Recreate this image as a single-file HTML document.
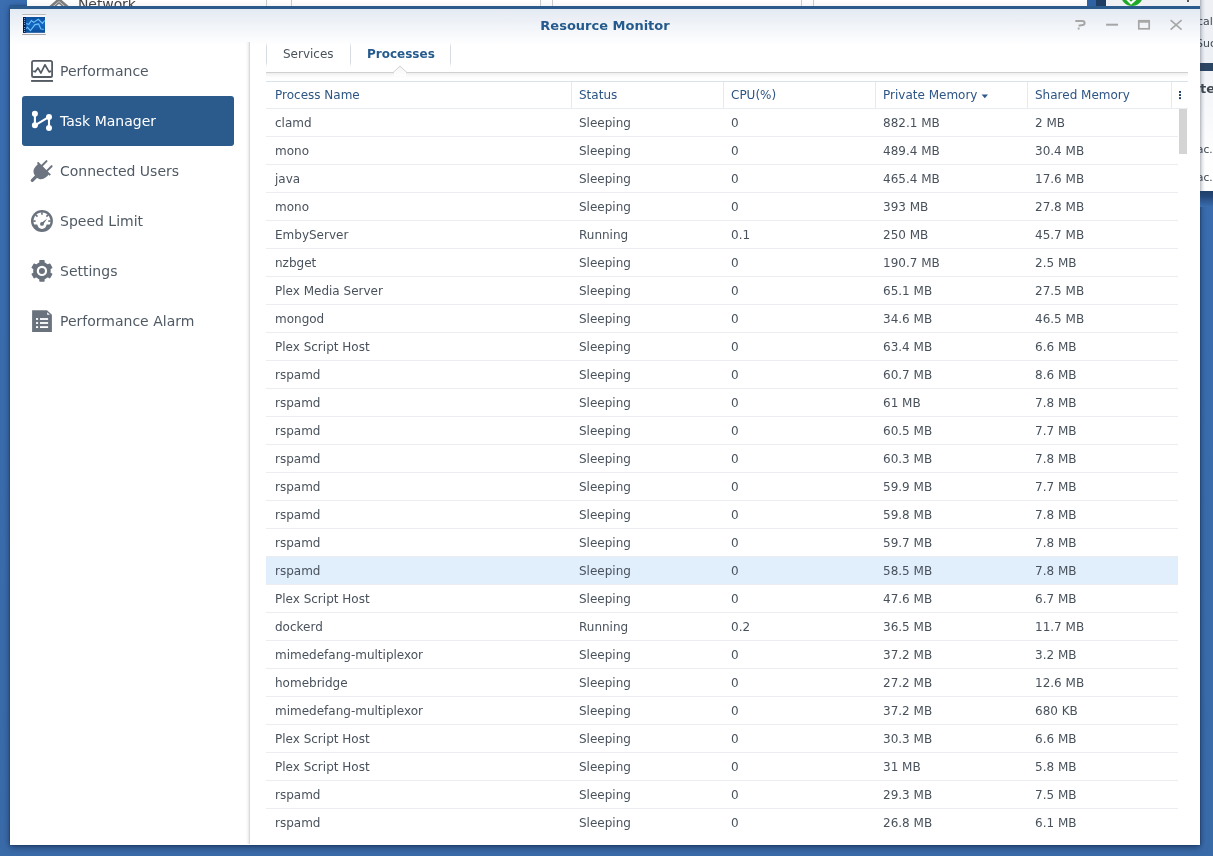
<!DOCTYPE html>
<html>
<head>
<meta charset="utf-8">
<title>Resource Monitor</title>
<style>
html,body{margin:0;padding:0;}
body{width:1213px;height:856px;overflow:hidden;position:relative;background:#2f62a3;font-family:"DejaVu Sans","Liberation Sans",sans-serif;font-size:12px;color:#49525c;}
.abs{position:absolute;}
#side,#tabs,#hdr,#grid,#title,#bgright div,#bgwin .nw{will-change:transform;}
#desk{left:0;top:0;width:1213px;height:856px;background:linear-gradient(#3a6eb1,#3a6ba9);}
#bgwin{left:27px;top:0;width:1173px;height:6px;background:linear-gradient(#fff,#f6f6f7);overflow:hidden;}
#bgwin .vl{position:absolute;top:0;width:1px;height:8px;background:#c9c9c9;}
#bgwin .nw{position:absolute;left:51px;top:-5px;font-size:14px;line-height:18px;color:#454545;letter-spacing:-0.1px;}
#bgright{left:1200px;top:0;width:13px;height:191px;background:linear-gradient(#eef0f4 0,#edf0f5 62px,#f1f3f7 72px,#fdfdfe 150px,#fff 191px);overflow:hidden;color:#3f4750;white-space:nowrap;}
#bgright div{position:absolute;}
#bgsh{left:1200px;top:191px;width:13px;height:16px;background:linear-gradient(#213f68 0,#25487a 35%,#3a6eb0 100%);}
#win{left:10px;top:6px;width:1190px;height:839px;background:#fff;box-shadow:0 2px 7px rgba(5,15,40,.5),0 0 2px rgba(5,15,40,.5);overflow:hidden;}
#topb{left:0;top:0;width:1190px;height:3px;background:#2a5b8c;}
#tbar{left:0;top:3px;width:1190px;height:36px;background:linear-gradient(#e4eaf2,#fff);}
#title{left:0;top:11px;width:1190px;text-align:center;font-weight:bold;font-size:13px;color:#245a8d;line-height:18px;}
#side{left:0;top:39px;width:238px;height:799px;}
#sdiv{left:236px;top:36px;width:4px;height:802px;background:linear-gradient(90deg,rgba(255,255,255,0) 0,#f3f3f3 50%,#e8e8e8 75%,#dadada 76%,#dadada 100%);}
.it{position:absolute;left:12px;width:212px;height:50px;line-height:50px;font-size:14px;color:#505a64;border-radius:3px;}
.it span{position:absolute;left:38px;top:0;}
.it svg{position:absolute;left:4px;top:10px;}
.it.on{background:#2a5b8c;color:#fff;}
#tabs{left:256px;top:36px;width:922px;height:30px;}
#tline{left:256px;top:66px;width:922px;height:6px;background:linear-gradient(#d0d0d0 0,#d0d0d0 1px,#eeeeee 1px,#f7f7f7 3px,#fff 6px);}
.tab{position:absolute;top:1px;height:23px;line-height:23px;font-size:12px;}
.tsep{position:absolute;top:0;width:1px;height:25px;background:linear-gradient(rgba(214,219,225,0),#d6dbe1 20%,#d6dbe1 80%,rgba(214,219,225,0));}
#htop{left:256px;top:75px;width:922px;height:1px;background:#d9e1ea;}
#hdr{left:256px;top:76px;width:922px;height:26px;border-bottom:1px solid #e9ecf1;color:#2d5585;line-height:27px;}
.hc{position:absolute;top:0;height:26px;}
.hsep{position:absolute;top:0;width:1px;height:26px;background:#e6eaef;}
#grid{left:256px;top:103px;width:912px;height:736px;}
.r{position:relative;height:27px;line-height:27px;border-bottom:1px solid #ebedf0;}
.r.sel{background:#e1eefc;}
.r:last-child{border-bottom-color:#fff;}
.c{position:absolute;top:1px;white-space:nowrap;}
.c1{left:9px}.c2{left:313px}.c3{left:465px}.c4{left:617px}.c5{left:769px}
#sb{left:1169px;top:103px;width:8px;height:45px;background:#d4d4d4;}
</style>
</head>
<body>
<div id="desk" class="abs"></div>
<div id="win" class="abs">
  <div id="tbar" class="abs"></div>
  <div id="topb" class="abs"></div>
  <svg class="abs" style="left:10px;top:6px" width="30" height="26" viewBox="20 12 30 26"><defs><linearGradient id="scr" x1="0" y1="0" x2="0" y2="1"><stop offset="0" stop-color="#0d4f9c"/><stop offset="0.5" stop-color="#1467c0"/><stop offset="1" stop-color="#0b4c98"/></linearGradient></defs><rect x="22.2" y="14" width="23.6" height="21" fill="#f4f6fb"/><rect x="22.2" y="14" width="23.6" height="1" fill="#b9b9b9"/><rect x="22.2" y="34" width="23.6" height="1" fill="#a9a9a9"/><rect x="23" y="17" width="22" height="15.8" fill="url(#scr)"/><rect x="23" y="17" width="2.8" height="15.8" fill="#031a4a"/><g fill="#9cc4ea"><rect x="24" y="18.2" width="1.2" height="0.9"/><rect x="24" y="20.2" width="1.2" height="0.9"/><rect x="24" y="22.2" width="1.2" height="0.9"/><rect x="24" y="24.2" width="1.2" height="0.9"/><rect x="24" y="27.0" width="1.2" height="0.9"/><rect x="24" y="29.0" width="1.2" height="0.9"/><rect x="24" y="31.0" width="1.2" height="0.9"/></g><polyline points="26.2,23.4 28.8,24.4 31.4,20.5 33.7,22.4 38.3,19.3 42.5,23.4 44.8,20.5" fill="none" stroke="#6cc3ff" stroke-width="1.1"/><polyline points="26.2,28.6 27.5,27.3 30.4,30.6 35,24.6 38.6,23.9 40.9,29 43.9,29.3" fill="none" stroke="#6cc3ff" stroke-width="1.1"/></svg>
  <svg class="abs" style="left:1060px;top:10px" width="120" height="18" viewBox="1070 16 120 18"><g fill="none" stroke="#a6a6a6" stroke-width="1.7"><path d="M1075.3 21H1082.4Q1084.6 21 1084.6 22.9Q1084.6 24.6 1082.6 25L1078.6 25.8" stroke-width="2"/><path d="M1106.1 24.7H1118" stroke-width="2"/><rect x="1138.8" y="21.2" width="10.4" height="7.6"/><path d="M1138 21.3H1150" stroke-width="2.8"/><path d="M1170.6 20.2L1181.6 29.6M1181.6 20.2L1170.6 29.6" stroke-width="1.6"/></g><rect x="1077.7" y="27.6" width="1.9" height="1.9" fill="#a6a6a6"/></svg>
  <div id="title" class="abs">Resource Monitor</div>
  <div id="side" class="abs">
    <div class="it" style="top:1px"><svg width="32" height="30" viewBox="26 56 32 30"><rect x="32" y="60.9" width="20.1" height="16.1" rx="1.6" fill="none" stroke="#555b63" stroke-width="1.8"/><rect x="31.1" y="80" width="21.9" height="1.9" fill="#555b63"/><polyline points="33.2,71.1 35.3,71.8 37.9,67.9 40.9,73 44.9,64.8 49.1,71.9 51.2,71.1" fill="none" stroke="#555b63" stroke-width="1.7" stroke-linejoin="round"/></svg><span>Performance</span></div>
    <div class="it on" style="top:51px"><svg width="32" height="30" viewBox="26 106 32 30"><g stroke="#fff" stroke-width="2.1" fill="none"><path d="M34.9 113.7V125.3L49 116.9V128.1"/></g><g fill="#fff"><circle cx="34.9" cy="113.7" r="3"/><circle cx="34.9" cy="125.3" r="3"/><circle cx="49" cy="116.9" r="3"/><circle cx="49" cy="128.1" r="3"/></g></svg><span>Task Manager</span></div>
    <div class="it" style="top:101px"><svg width="32" height="30" viewBox="26 156 32 30"><g transform="translate(43.9 168.8) rotate(45)" fill="#6b7480" stroke="none"><rect x="-9" y="-0.9" width="18" height="1.8"/><path d="M-7.4,0 C-7.9,5 -7.5,11.2 0,11.2 C7.5,11.2 7.9,5 7.4,0 Z"/><path d="M0,10 V16.4" stroke="#6b7480" stroke-width="3.2" stroke-linecap="round"/><path d="M-3.6,0 V-7.3 M3.6,0 V-7.3" stroke="#6b7480" stroke-width="2" stroke-linecap="round"/></g></svg><span>Connected Users</span></div>
    <div class="it" style="top:151px"><svg width="32" height="30" viewBox="26 206 32 30"><circle cx="41.95" cy="221.07" r="10.95" fill="#69727d"/><path d="M34.22 224.6A8.5 8.5 0 1 1 49.68 224.6Z" fill="#fff"/><circle cx="41.95" cy="224.3" r="4.6" fill="#fff"/><g stroke="#69727d" stroke-width="1.6"><path d="M33.15 221.07L35.65 221.07"/><path d="M35.73 214.85L37.50 216.62"/><path d="M41.95 212.27L41.95 214.77"/><path d="M48.17 214.85L46.40 216.62"/><path d="M50.75 221.07L48.25 221.07"/></g><circle cx="41.95" cy="223.9" r="1.9" fill="#69727d"/><path d="M41.2 223.0L47.3 218.6L42.9 224.8Z" fill="#69727d"/></svg><span>Speed Limit</span></div>
    <div class="it" style="top:201px"><svg width="32" height="30" viewBox="26 256 32 30"><g transform="translate(41.95 270.90)" fill="#69727d"><circle r="8.8"/><rect x="-2.7" y="-10.8" width="5.4" height="6" rx="0.7" transform="rotate(0)"/><rect x="-2.7" y="-10.8" width="5.4" height="6" rx="0.7" transform="rotate(60)"/><rect x="-2.7" y="-10.8" width="5.4" height="6" rx="0.7" transform="rotate(120)"/><rect x="-2.7" y="-10.8" width="5.4" height="6" rx="0.7" transform="rotate(180)"/><rect x="-2.7" y="-10.8" width="5.4" height="6" rx="0.7" transform="rotate(240)"/><rect x="-2.7" y="-10.8" width="5.4" height="6" rx="0.7" transform="rotate(300)"/><circle r="5.2" fill="#fff"/><circle r="3"/></g></svg><span>Settings</span></div>
    <div class="it" style="top:251px"><svg width="32" height="30" viewBox="26 306 32 30"><path d="M32.1 310.2H47L51.9 314.8V331.9H32.1Z" fill="#69727d"/><path d="M47.2 312.3V314.8H49.9Z" fill="#fff"/><g fill="#fff"><rect x="36" y="318.1" width="2.1" height="1.8"/><rect x="40" y="318.1" width="8.1" height="1.8"/><rect x="36" y="322.1" width="2.1" height="1.8"/><rect x="40" y="322.1" width="8.1" height="1.8"/><rect x="36" y="326.2" width="2.1" height="1.8"/><rect x="40" y="326.2" width="8.1" height="1.8"/></g></svg><span>Performance Alarm</span></div>
  </div>
  <div id="sdiv" class="abs"></div>
  <div id="tabs" class="abs">
    <div class="tsep" style="left:0"></div>
    <div class="tab" style="left:17px">Services</div>
    <div class="tsep" style="left:84px"></div>
    <div class="tab" style="left:101px;font-weight:bold;color:#245a8d">Processes</div>
    <div class="tsep" style="left:184px"></div>
  </div>
  <div id="tline" class="abs"></div>
  <svg class="abs" style="left:382px;top:58px" width="16" height="12" viewBox="392 64 16 12"><defs><linearGradient id="ng" x1="0" y1="0" x2="0" y2="1"><stop offset="0" stop-color="#f4f4f4"/><stop offset="1" stop-color="#fff"/></linearGradient></defs><path d="M393.4 73L400 66.4L406.6 73Z" fill="#fff"/><path d="M393.9 72.5L400 66.4L406.1 72.5V76H393.9Z" fill="url(#ng)"/><path d="M393.2 72.5L400 65.9L406.8 72.5" fill="none" stroke="#cfcfcf" stroke-width="1"/></svg>
  <div id="htop" class="abs"></div>
  <div id="hdr" class="abs">
    <div class="hc" style="left:9px">Process Name</div>
    <div class="hsep" style="left:305px"></div>
    <div class="hc" style="left:313px">Status</div>
    <div class="hsep" style="left:457px"></div>
    <div class="hc" style="left:465px">CPU(%)</div>
    <div class="hsep" style="left:609px"></div>
    <div class="hc" style="left:617px">Private Memory</div><svg class="abs" style="left:715px;top:12px" width="8" height="5" viewBox="0 0 8 5"><path d="M0.6 0.6H7L3.8 4.2Z" fill="#2f5a8b"/></svg>
    <div class="hsep" style="left:761px"></div>
    <div class="hc" style="left:769px">Shared Memory</div>
    <div class="hsep" style="left:905px"></div>
    <svg class="abs" style="left:912px;top:9px" width="4" height="10" viewBox="0 0 4 10"><g fill="#1c3f6b"><rect x="1" y="0" width="2" height="1.9"/><rect x="1" y="3.1" width="2" height="1.9"/><rect x="1" y="6.2" width="2" height="1.9"/></g></svg>
  </div>
  <div id="grid" class="abs">
<div class="r"><span class="c c1">clamd</span><span class="c c2">Sleeping</span><span class="c c3">0</span><span class="c c4">882.1 MB</span><span class="c c5">2 MB</span></div>
<div class="r"><span class="c c1">mono</span><span class="c c2">Sleeping</span><span class="c c3">0</span><span class="c c4">489.4 MB</span><span class="c c5">30.4 MB</span></div>
<div class="r"><span class="c c1">java</span><span class="c c2">Sleeping</span><span class="c c3">0</span><span class="c c4">465.4 MB</span><span class="c c5">17.6 MB</span></div>
<div class="r"><span class="c c1">mono</span><span class="c c2">Sleeping</span><span class="c c3">0</span><span class="c c4">393 MB</span><span class="c c5">27.8 MB</span></div>
<div class="r"><span class="c c1">EmbyServer</span><span class="c c2">Running</span><span class="c c3">0.1</span><span class="c c4">250 MB</span><span class="c c5">45.7 MB</span></div>
<div class="r"><span class="c c1">nzbget</span><span class="c c2">Sleeping</span><span class="c c3">0</span><span class="c c4">190.7 MB</span><span class="c c5">2.5 MB</span></div>
<div class="r"><span class="c c1">Plex Media Server</span><span class="c c2">Sleeping</span><span class="c c3">0</span><span class="c c4">65.1 MB</span><span class="c c5">27.5 MB</span></div>
<div class="r"><span class="c c1">mongod</span><span class="c c2">Sleeping</span><span class="c c3">0</span><span class="c c4">34.6 MB</span><span class="c c5">46.5 MB</span></div>
<div class="r"><span class="c c1">Plex Script Host</span><span class="c c2">Sleeping</span><span class="c c3">0</span><span class="c c4">63.4 MB</span><span class="c c5">6.6 MB</span></div>
<div class="r"><span class="c c1">rspamd</span><span class="c c2">Sleeping</span><span class="c c3">0</span><span class="c c4">60.7 MB</span><span class="c c5">8.6 MB</span></div>
<div class="r"><span class="c c1">rspamd</span><span class="c c2">Sleeping</span><span class="c c3">0</span><span class="c c4">61 MB</span><span class="c c5">7.8 MB</span></div>
<div class="r"><span class="c c1">rspamd</span><span class="c c2">Sleeping</span><span class="c c3">0</span><span class="c c4">60.5 MB</span><span class="c c5">7.7 MB</span></div>
<div class="r"><span class="c c1">rspamd</span><span class="c c2">Sleeping</span><span class="c c3">0</span><span class="c c4">60.3 MB</span><span class="c c5">7.8 MB</span></div>
<div class="r"><span class="c c1">rspamd</span><span class="c c2">Sleeping</span><span class="c c3">0</span><span class="c c4">59.9 MB</span><span class="c c5">7.7 MB</span></div>
<div class="r"><span class="c c1">rspamd</span><span class="c c2">Sleeping</span><span class="c c3">0</span><span class="c c4">59.8 MB</span><span class="c c5">7.8 MB</span></div>
<div class="r"><span class="c c1">rspamd</span><span class="c c2">Sleeping</span><span class="c c3">0</span><span class="c c4">59.7 MB</span><span class="c c5">7.8 MB</span></div>
<div class="r sel"><span class="c c1">rspamd</span><span class="c c2">Sleeping</span><span class="c c3">0</span><span class="c c4">58.5 MB</span><span class="c c5">7.8 MB</span></div>
<div class="r"><span class="c c1">Plex Script Host</span><span class="c c2">Sleeping</span><span class="c c3">0</span><span class="c c4">47.6 MB</span><span class="c c5">6.7 MB</span></div>
<div class="r"><span class="c c1">dockerd</span><span class="c c2">Running</span><span class="c c3">0.2</span><span class="c c4">36.5 MB</span><span class="c c5">11.7 MB</span></div>
<div class="r"><span class="c c1">mimedefang-multiplexor</span><span class="c c2">Sleeping</span><span class="c c3">0</span><span class="c c4">37.2 MB</span><span class="c c5">3.2 MB</span></div>
<div class="r"><span class="c c1">homebridge</span><span class="c c2">Sleeping</span><span class="c c3">0</span><span class="c c4">27.2 MB</span><span class="c c5">12.6 MB</span></div>
<div class="r"><span class="c c1">mimedefang-multiplexor</span><span class="c c2">Sleeping</span><span class="c c3">0</span><span class="c c4">37.2 MB</span><span class="c c5">680 KB</span></div>
<div class="r"><span class="c c1">Plex Script Host</span><span class="c c2">Sleeping</span><span class="c c3">0</span><span class="c c4">30.3 MB</span><span class="c c5">6.6 MB</span></div>
<div class="r"><span class="c c1">Plex Script Host</span><span class="c c2">Sleeping</span><span class="c c3">0</span><span class="c c4">31 MB</span><span class="c c5">5.8 MB</span></div>
<div class="r"><span class="c c1">rspamd</span><span class="c c2">Sleeping</span><span class="c c3">0</span><span class="c c4">29.3 MB</span><span class="c c5">7.5 MB</span></div>
<div class="r"><span class="c c1">rspamd</span><span class="c c2">Sleeping</span><span class="c c3">0</span><span class="c c4">26.8 MB</span><span class="c c5">6.1 MB</span></div>
  </div>
  <div id="sb" class="abs"></div>
</div>
<div id="bgwin" class="abs"><svg class="abs" style="left:21px;top:0" width="22" height="8" viewBox="48 0 22 8"><path d="M50 7.2L59 -0.6L68 7.2" fill="none" stroke="#7d7d7d" stroke-width="2.6"/><path d="M53.5 7.5L59 2.8L64.5 7.5" fill="none" stroke="#7d7d7d" stroke-width="1.6"/></svg><div class="nw">Network</div><div class="vl" style="left:239px"></div><div class="vl" style="left:264px"></div><div class="vl" style="left:513px"></div><div class="vl" style="left:525px"></div><div class="vl" style="left:774px"></div><div class="vl" style="left:786px"></div><div class="abs" style="left:1060px;top:0;width:9px;height:8px;background:#2f62a3"></div><div class="abs" style="left:1069px;top:0;width:10px;height:8px;background:#1f3c62"></div><div class="abs" style="left:1079px;top:0;width:94px;height:6px;background:#eef0f4"></div><div class="abs" style="left:1093.8px;top:-16.2px;width:22.4px;height:22.4px;border-radius:50%;background:#22a828"></div><svg class="abs" style="left:1098px;top:0" width="14" height="6" viewBox="1125 0 14 6"><path d="M1126.3 0L1131 4.7L1136.3 0H1132.9L1131 1.7L1129.2 0Z" fill="#fff"/></svg><div class="abs" style="left:1160px;top:0;width:2px;height:2px;background:#555"></div></div>
<div id="bgright" class="abs"><div style="left:0px;top:63px;width:13px;height:8px;background:#2b4564"></div><div style="left:0px;top:0;width:5px;height:191px;background:linear-gradient(90deg,rgba(40,50,70,.32),rgba(40,50,70,.1) 50%,rgba(40,50,70,0))"></div><div style="left:-3.4px;top:13px;font-size:11px;line-height:18px">cal</div><div style="left:-4px;top:35px;font-size:11px;line-height:18px">Suc</div><div style="left:-0.5px;top:80px;font-size:13px;line-height:18px;font-weight:bold">te</div><div style="left:-3.5px;top:141px;font-size:10.5px;line-height:16px">ac...</div><div style="left:-3.5px;top:169px;font-size:10.5px;line-height:16px">ac...</div></div>
<div id="bgsh" class="abs"></div>
</body>
</html>
